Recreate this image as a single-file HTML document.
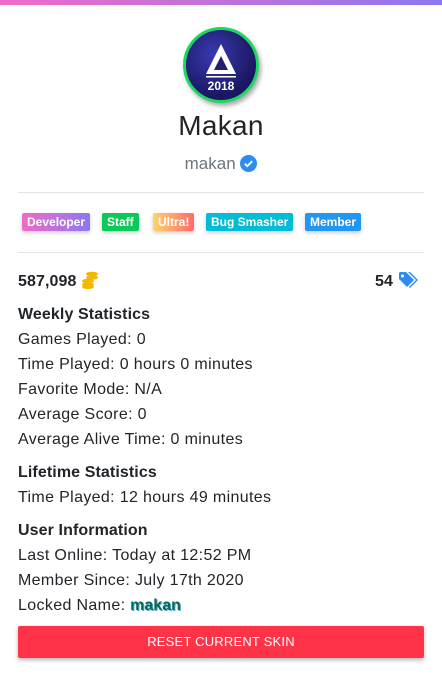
<!DOCTYPE html>
<html><head><style>
body{margin:0;width:442px;height:682px;background:#fff;font-family:"Liberation Sans",sans-serif;color:#212529;overflow:hidden;position:relative}
.bar{position:absolute;top:0;left:0;width:442px;height:5px;background:linear-gradient(90deg,#f06bc8,#8c78f0)}
.av{position:absolute;left:183px;top:27px;width:70px;height:70px;border-radius:50%;border:3px solid #1ed760;background:radial-gradient(circle at 40% 35%,#3a3ab0,#1a1660 70%);box-shadow:2px 3px 5px rgba(0,0,0,.35)}
.name{position:absolute;top:110px;width:442px;text-align:center;font-size:28px;letter-spacing:.3px}
.user{position:absolute;top:154px;width:442px;text-align:center;font-size:17px;color:#6c757d}
.hr{position:absolute;left:18px;width:406px;height:1px;background:#e3e3e3}
.b{position:absolute;top:213px;height:18px;line-height:18px;color:#fff;font-weight:bold;font-size:12px;padding:0 5px;border-radius:2px;box-shadow:0 2px 4px rgba(0,0,0,.2)}
.t{position:absolute;left:18px;font-size:16px;line-height:25px;white-space:nowrap;letter-spacing:.35px}
.h{font-weight:bold;letter-spacing:.1px}
.btn{position:absolute;left:18px;top:626px;width:406px;height:32px;background:#ff3347;color:#fff;font-size:13px;text-align:center;line-height:32px;border-radius:2px;box-shadow:0 2px 4px rgba(0,0,0,.3);letter-spacing:.2px}
</style></head><body>
<div class="bar"></div>
<div class="av"><svg width="70" height="70" viewBox="0 0 70 70"><path d="M35 14 L50 44 L20 44 Z" fill="#fff"/><path d="M35 26 L42 40 L28 40 Z" fill="#22206a"/><rect x="20" y="46" width="30" height="1.5" fill="#fff"/><text x="35" y="60" text-anchor="middle" font-size="12" font-weight="bold" fill="#fff" font-family="Liberation Sans">2018</text></svg></div>
<div class="name">Makan</div>
<div class="user">makan <svg width="17" height="17" viewBox="0 0 16 16" style="vertical-align:-3px"><circle cx="8" cy="8" r="8" fill="#2d8cf0"/><path d="M4.5 8.2l2.3 2.3 4.7-4.7" stroke="#fff" stroke-width="1.8" fill="none"/></svg></div>
<div class="hr" style="top:192px"></div>
<div class="b" style="left:22px;background:linear-gradient(90deg,#f06bc8,#8c78f0)">Developer</div>
<div class="b" style="left:102px;background:#0ac85a">Staff</div>
<div class="b" style="left:153px;background:linear-gradient(90deg,#ffd36b,#ff6b6b)">Ultra!</div>
<div class="b" style="left:206px;background:#00bcd4">Bug Smasher</div>
<div class="b" style="left:305px;background:#2196f3">Member</div>
<div class="hr" style="top:252px"></div>
<div class="t h" style="top:269px">587,098 <svg width="18" height="18" viewBox="0 0 18 18" style="vertical-align:-3px"><g fill="#f5b800"><ellipse cx="11" cy="3" rx="6" ry="2.3"/><ellipse cx="11" cy="6.5" rx="6" ry="2.3"/><ellipse cx="7" cy="10" rx="6" ry="2.3"/><ellipse cx="7" cy="13.5" rx="6" ry="2.3"/><ellipse cx="7" cy="16" rx="6" ry="2"/></g></svg></div>
<div class="t h" style="top:269px;left:375px">54 <svg width="22" height="18" viewBox="0 0 22 18" style="vertical-align:-3px"><path d="M1 2v6l8 8 7-7-8-8H2z" fill="#2d8cf0"/><path d="M10 1l8 8-7 7 1 1 8-8-8-8z" fill="#2d8cf0"/><circle cx="4.5" cy="5" r="1.5" fill="#fff"/></svg></div>
<div class="t h" style="top:302px">Weekly Statistics</div>
<div class="t" style="top:327px">Games Played: 0</div>
<div class="t" style="top:352px">Time Played: 0 hours 0 minutes</div>
<div class="t" style="top:377px">Favorite Mode: N/A</div>
<div class="t" style="top:402px">Average Score: 0</div>
<div class="t" style="top:427px">Average Alive Time: 0 minutes</div>
<div class="t h" style="top:460px">Lifetime Statistics</div>
<div class="t" style="top:485px">Time Played: 12 hours 49 minutes</div>
<div class="t h" style="top:518px">User Information</div>
<div class="t" style="top:543px">Last Online: Today at 12:52 PM</div>
<div class="t" style="top:568px">Member Since: July 17th 2020</div>
<div class="t" style="top:593px">Locked Name: <b style="color:#0a6a50;text-shadow:1px 1px 0 #5ad;letter-spacing:0">makan</b></div>
<div class="btn">RESET CURRENT SKIN</div>
</body></html>
